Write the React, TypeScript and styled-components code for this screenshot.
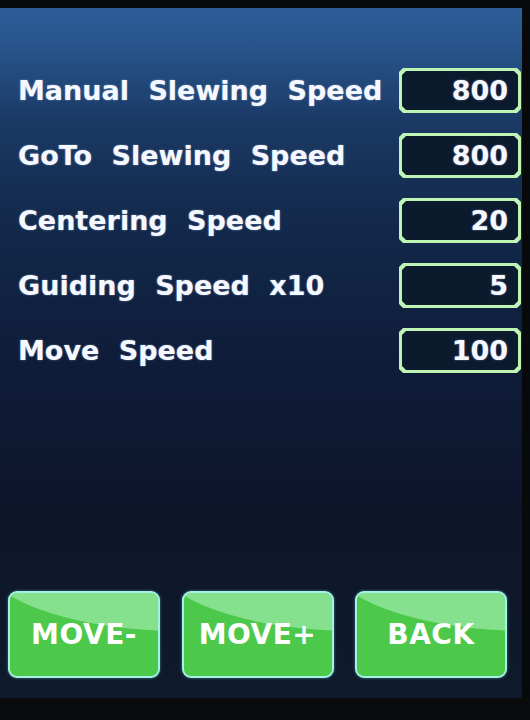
import React from 'react';
import styled, { createGlobalStyle } from 'styled-components';

const GlobalStyle = createGlobalStyle`
  html, body {
    margin: 0;
    padding: 0;
    background: #070809;
  }
  body {
    width: 530px;
    height: 720px;
    overflow: hidden;
    font-family: "DejaVu Sans", "Liberation Sans", sans-serif;
  }
`;

const Frame = styled.div`
  width: 530px;
  height: 720px;
  padding-top: 8px;
  box-sizing: border-box;
  background: #08090b;
`;

const Screen = styled.div`
  width: 522px;
  height: 690px;
  box-sizing: border-box;
  padding: 60px 1px 20px 0;
  display: flex;
  flex-direction: column;
  background: linear-gradient(
    180deg,
    #2d5e98 0%,
    #27548a 6%,
    #1b3a66 16%,
    #132a4c 30%,
    #0f1d3a 50%,
    #0d152b 72%,
    #0f1a2c 100%
  );
`;

const SettingsList = styled.div`
  display: flex;
  flex-direction: column;
  gap: 20px;
`;

const Row = styled.div`
  display: flex;
  align-items: center;
  justify-content: space-between;
  height: 45px;
  padding-left: 18px;
`;

const Label = styled.span`
  color: #f6f8ff;
  font-size: 27px;
  font-weight: 700;
  letter-spacing: 0;
  word-spacing: 10px;
  text-shadow: 0 0 2px rgba(180, 210, 255, 0.6);
`;

const octagon = `polygon(4px 0, calc(100% - 4px) 0, 100% 4px, 100% calc(100% - 4px), calc(100% - 4px) 100%, 4px 100%, 0 calc(100% - 4px), 0 4px)`;

const ValueFrame = styled.div`
  width: 122px;
  height: 45px;
  box-sizing: border-box;
  padding: 3px;
  background: #bff5b4;
  clip-path: ${octagon};
`;

const ValueInner = styled.div`
  height: 100%;
  display: flex;
  align-items: center;
  justify-content: flex-end;
  padding-right: 10px;
  background: #0c1a2e;
  clip-path: ${octagon};
  color: #f6f8ff;
  font-size: 27px;
  font-weight: 700;
  text-shadow: 0 0 2px rgba(180, 210, 255, 0.6);
`;

const Spacer = styled.div`
  flex: 1;
`;

const ButtonBar = styled.div`
  display: flex;
  justify-content: space-between;
  padding: 0 14px 0 8px;
`;

const SoftButton = styled.button`
  position: relative;
  width: 152px;
  height: 87px;
  padding: 0;
  border: 2px solid #a4f0e4;
  border-radius: 9px;
  background: #4cc94a;
  overflow: hidden;
  color: #ffffff;
  font-family: "DejaVu Sans", "Liberation Sans", sans-serif;
  font-size: 28px;
  font-weight: 700;
  letter-spacing: 0.5px;
  box-shadow: 0 0 3px rgba(120, 230, 220, 0.5);

  /* glossy highlight, heavier towards the upper right */
  &::before {
    content: '';
    position: absolute;
    left: -30px;
    top: -112px;
    width: 400px;
    height: 150px;
    border-radius: 50%;
    background: rgba(205, 255, 225, 0.45);
  }

  span {
    position: relative;
  }
`;

const Bezel = styled.div`
  height: 22px;
  background: #0a0b0c;
`;

const settings = [
  { label: 'Manual Slewing Speed', value: '800' },
  { label: 'GoTo Slewing Speed', value: '800' },
  { label: 'Centering Speed', value: '20' },
  { label: 'Guiding Speed x10', value: '5' },
  { label: 'Move Speed', value: '100' },
];

export default function App() {
  return (
    <>
      <GlobalStyle />
      <Frame>
        <Screen>
          <SettingsList>
            {settings.map((s) => (
              <Row key={s.label}>
                <Label>{s.label}</Label>
                <ValueFrame>
                  <ValueInner>{s.value}</ValueInner>
                </ValueFrame>
              </Row>
            ))}
          </SettingsList>
          <Spacer />
          <ButtonBar>
            <SoftButton><span>MOVE-</span></SoftButton>
            <SoftButton><span>MOVE+</span></SoftButton>
            <SoftButton><span>BACK</span></SoftButton>
          </ButtonBar>
        </Screen>
        <Bezel />
      </Frame>
    </>
  );
}
